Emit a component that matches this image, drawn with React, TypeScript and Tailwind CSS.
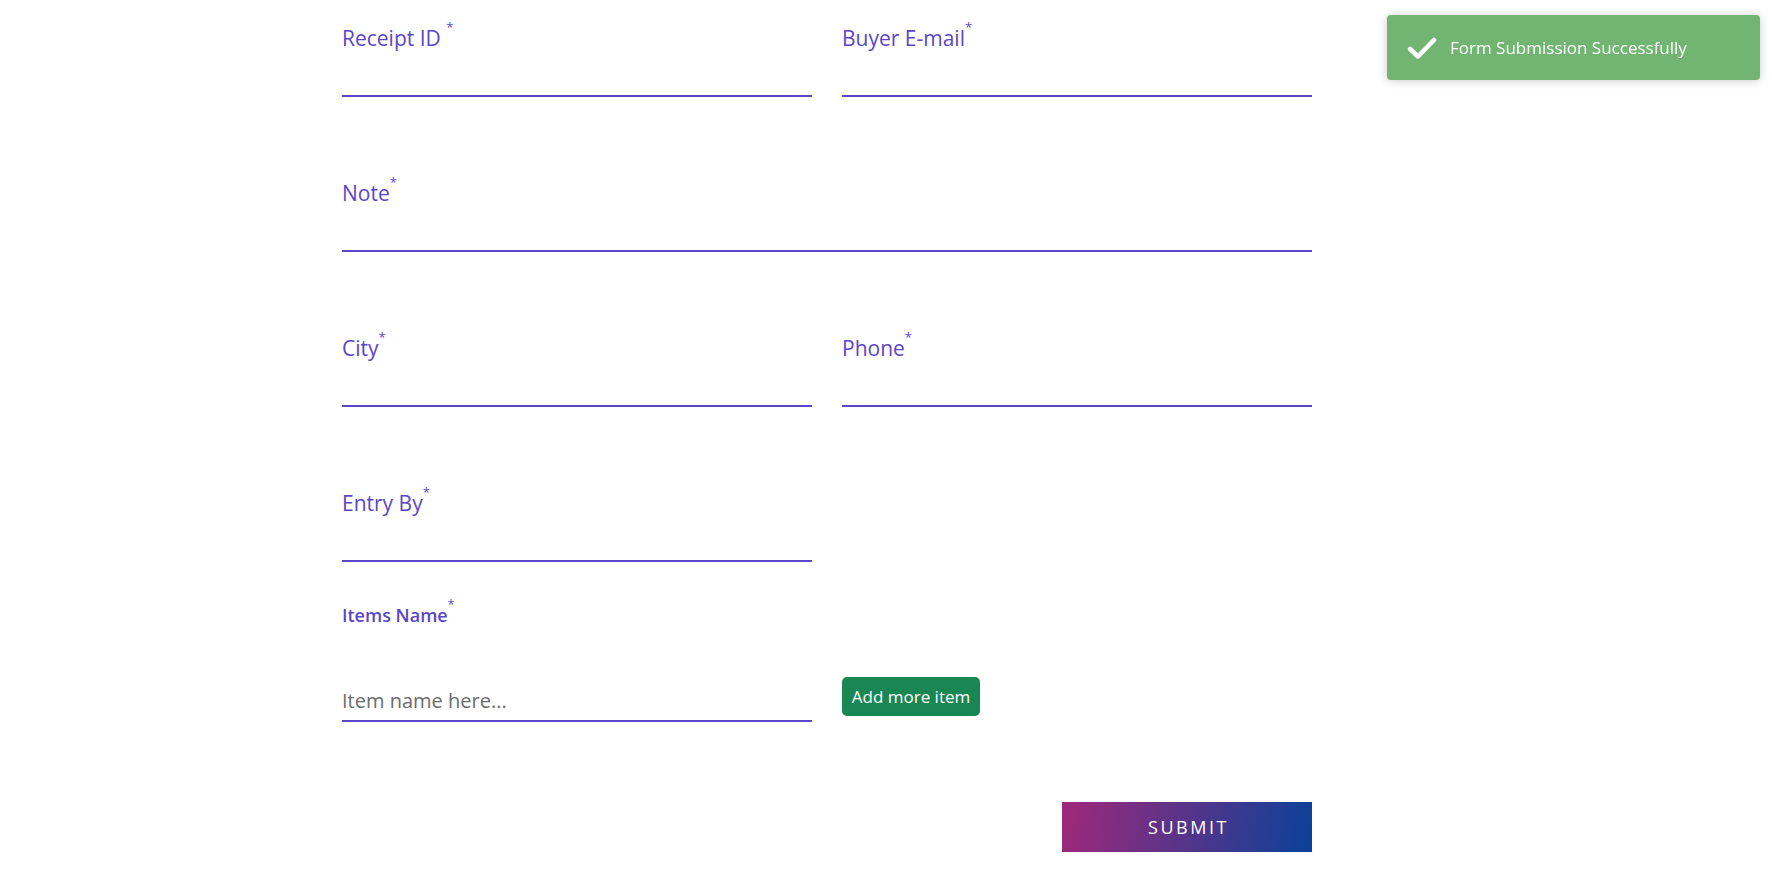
import React from "react";

const FONT = { fontFamily: '"Open Sans", "Noto Sans", sans-serif' };

function Field({ label, space = false }: { label: string; space?: boolean }) {
  return (
    <div className="flex flex-col">
      <div className="pt-[3px] h-[31px] leading-[28px] text-[21px] text-[#5a46c8]">
        {label}
        {space ? " " : ""}
        <sup className="text-[13px] align-top relative top-[3px]">*</sup>
      </div>
      <input
        className="h-[45px] w-full border-b-2 border-[#5a46c8] outline-none bg-transparent text-[20px]"
        type="text"
      />
    </div>
  );
}

export default function App() {
  return (
    <div className="min-h-screen bg-white relative" style={FONT}>
      <div className="ml-[342px] w-[970px] pt-[21px]">
        <div className="grid grid-cols-2 gap-x-[30px]">
          <Field label="Receipt ID" space />
          <Field label="Buyer E-mail" />
        </div>
        <div className="mt-[79px]">
          <Field label="Note" />
        </div>
        <div className="mt-[79px] grid grid-cols-2 gap-x-[30px]">
          <Field label="City" />
          <Field label="Phone" />
        </div>
        <div className="mt-[79px] grid grid-cols-2 gap-x-[30px]">
          <Field label="Entry By" />
          <div />
        </div>
        <div className="mt-[41px] h-[24px] leading-[24px] text-[18px] font-semibold text-[#5a46c8]">
          Items Name
          <sup className="text-[12px] font-normal align-top relative top-[2px]">*</sup>
        </div>
        <div className="mt-[50px] flex items-start gap-x-[30px]">
          <input
            className="mt-[3px] h-[42px] w-[470px] border-b-2 border-[#5a46c8] outline-none bg-transparent text-[20px] text-[#333] placeholder:text-[#6c6c6c]"
            type="text"
            placeholder="Item name here..."
          />
          <button className="h-[39px] w-[138px] rounded-[5px] bg-[#198754] text-white text-[17px] leading-[39px]">
            Add more item
          </button>
        </div>
        <div className="mt-[80px] flex justify-end">
          <button className="h-[50px] w-[250px] bg-[linear-gradient(100deg,#a0287a,#0a4199)] text-white text-[18px] tracking-[2.5px] pl-[3px]">
            SUBMIT
          </button>
        </div>
      </div>

      <div className="fixed top-[15px] right-[12px] w-[373px] h-[65px] bg-[#72b572] rounded-[4px] shadow-[0_1px_10px_rgba(0,0,0,0.2)] flex items-center pl-[20px]">
        <svg width="30" height="24" viewBox="0 0 30 24" className="shrink-0">
          <polyline
            points="3,13 11,20.5 27,4"
            fill="none"
            stroke="white"
            strokeWidth="4.5"
            strokeLinecap="round"
            strokeLinejoin="round"
          />
        </svg>
        <span className="ml-[13px] text-white text-[17px]">Form Submission Successfully</span>
      </div>
    </div>
  );
}
